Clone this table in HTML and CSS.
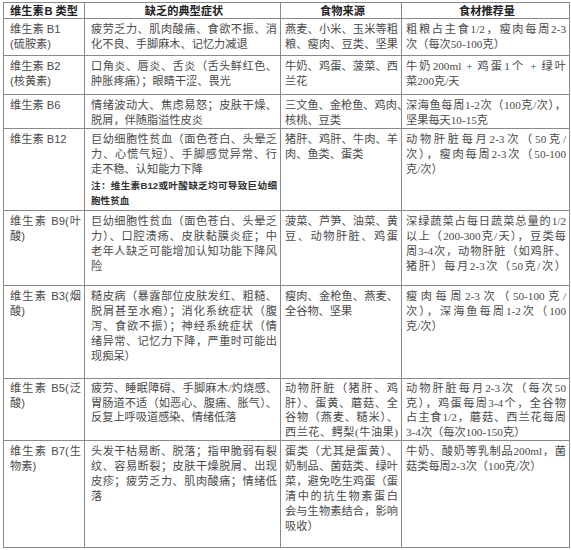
FILE: index.html
```html
<!DOCTYPE html>
<html lang="zh-CN">
<head>
<meta charset="utf-8">
<title>维生素B类型</title>
<link rel="stylesheet" href="styles.css">
</head>
<body>
<table class="vt">
  <colgroup>
    <col class="c1"><col class="c2"><col class="c3"><col class="c4">
  </colgroup>
  <thead>
    <tr class="rh">
      <th class="th-left">维生素<span class="lat">B</span> 类型</th>
      <th>缺乏的典型症状</th>
      <th>食物来源</th>
      <th>食材推荐量</th>
    </tr>
  </thead>
  <tbody>
    <tr class="r-b1">
      <td class="name"><span class="ln e">维生素 B1</span><span class="ln e">(硫胺素)</span></td>
      <td><span class="ln">疲劳乏力、肌肉酸痛、食欲不振、消</span><span class="ln e">化不良、手脚麻木、记忆力减退</span></td>
      <td><span class="ln">燕麦、小米、玉米等粗</span><span class="ln">粮、瘦肉、豆类、坚果</span></td>
      <td><span class="ln">粗粮占主食1/2，瘦肉每周2-3</span><span class="ln e">次（每次50-100克）</span></td>
    </tr>
    <tr class="r-b2">
      <td class="name"><span class="ln e">维生素 B2</span><span class="ln e">(核黄素)</span></td>
      <td><span class="ln">口角炎、唇炎、舌炎（舌头鲜红色、</span><span class="ln e">肿胀疼痛）；眼睛干涩、畏光</span></td>
      <td><span class="ln">牛奶、鸡蛋、菠菜、西</span><span class="ln e">兰花</span></td>
      <td><span class="ln">牛奶200ml + 鸡蛋1个 + 绿叶</span><span class="ln e">菜200克/天</span></td>
    </tr>
    <tr class="r-b6">
      <td class="name"><span class="ln e">维生素 B6</span></td>
      <td><span class="ln">情绪波动大、焦虑易怒；皮肤干燥、</span><span class="ln e">脱屑，伴随脂溢性皮炎</span></td>
      <td><span class="ln">三文鱼、金枪鱼、鸡肉、</span><span class="ln e">核桃、豆类</span></td>
      <td><span class="ln">深海鱼每周1-2次（100克/次），</span><span class="ln e">坚果每天10-15克</span></td>
    </tr>
    <tr class="r-b12">
      <td class="name"><span class="ln e">维生素 B12</span></td>
      <td>
        <div class="p"><span class="ln">巨幼细胞性贫血（面色苍白、头晕乏</span><span class="ln">力、心慌气短）、手脚感觉异常、行</span><span class="ln e">走不稳、认知能力下降</span></div>
        <div class="p note"><span class="ln">注：维生素<span class="nl">B12</span>或叶酸缺乏均可导致巨幼细</span><span class="ln e">胞性贫血</span></div>
      </td>
      <td><span class="ln">猪肝、鸡肝、牛肉、羊</span><span class="ln e">肉、鱼类、蛋类</span></td>
      <td><span class="ln">动物肝脏每月2-3次（50克/</span><span class="ln">次），瘦肉每周2-3次（50-100</span><span class="ln e">克/次）</span></td>
    </tr>
    <tr class="r-b9">
      <td class="name"><span class="ln">维生素 B9(叶</span><span class="ln e">酸)</span></td>
      <td><span class="ln">巨幼细胞性贫血（面色苍白、头晕乏</span><span class="ln">力）、口腔溃疡、皮肤黏膜炎症；中</span><span class="ln">老年人缺乏可能增加认知功能下降风</span><span class="ln e">险</span></td>
      <td><span class="ln">菠菜、芦笋、油菜、黄</span><span class="ln">豆、动物肝脏、鸡蛋</span></td>
      <td><span class="ln">深绿蔬菜占每日蔬菜总量的1/2</span><span class="ln">以上（200-300克/天），豆类每</span><span class="ln">周3-4次，动物肝脏（如鸡肝、</span><span class="ln">猪肝）每月2-3次（50克/次）</span></td>
    </tr>
    <tr class="r-b3">
      <td class="name"><span class="ln">维生素 B3(烟</span><span class="ln e">酸)</span></td>
      <td><span class="ln">糙皮病（暴露部位皮肤发红、粗糙、</span><span class="ln">脱屑甚至水疱）；消化系统症状（腹</span><span class="ln">泻、食欲不振）；神经系统症状（情</span><span class="ln">绪异常、记忆力下降，严重时可能出</span><span class="ln e">现痴呆）</span></td>
      <td><span class="ln">瘦肉、金枪鱼、燕麦、</span><span class="ln e">全谷物、坚果</span></td>
      <td><span class="ln">瘦肉每周2-3次（50-100克/</span><span class="ln">次），深海鱼每周1-2次（100</span><span class="ln e">克/次）</span></td>
    </tr>
    <tr class="r-b5">
      <td class="name"><span class="ln">维生素 B5(泛</span><span class="ln e">酸)</span></td>
      <td><span class="ln">疲劳、睡眠障碍、手脚麻木/灼烧感、</span><span class="ln">胃肠道不适（如恶心、腹痛、胀气）、</span><span class="ln e">反复上呼吸道感染、情绪低落</span></td>
      <td><span class="ln">动物肝脏（猪肝、鸡</span><span class="ln">肝）、蛋黄、蘑菇、全</span><span class="ln">谷物（燕麦、糙米）、</span><span class="ln">西兰花、鳄梨(牛油果)</span></td>
      <td><span class="ln">动物肝脏每月2-3次（每次50</span><span class="ln">克），鸡蛋每周3-4个，全谷物</span><span class="ln">占主食1/2，蘑菇、西兰花每周</span><span class="ln e">3-4次（每次100-150克）</span></td>
    </tr>
    <tr class="r-b7">
      <td class="name"><span class="ln">维生素 B7(生</span><span class="ln e">物素)</span></td>
      <td><span class="ln">头发干枯易断、脱落；指甲脆弱有裂</span><span class="ln">纹、容易断裂；皮肤干燥脱屑、出现</span><span class="ln">皮疹；疲劳乏力、肌肉酸痛；情绪低</span><span class="ln e">落</span></td>
      <td><span class="ln">蛋类（尤其是蛋黄）、</span><span class="ln">奶制品、菌菇类、绿叶</span><span class="ln">菜，避免吃生鸡蛋（蛋</span><span class="ln">清中的抗生物素蛋白</span><span class="ln">会与生物素结合，影响</span><span class="ln e">吸收）</span></td>
      <td><span class="ln">牛奶、酸奶等乳制品200ml，菌</span><span class="ln e">菇类每周2-3次（100克/次）</span></td>
    </tr>
  </tbody>
</table>
</body>
</html>
```

FILE: styles.css
```css
html, body {
  margin: 0;
  padding: 0;
  background: #ffffff;
}

body {
  font-family: "Liberation Serif", "Noto Sans CJK SC", serif;
  color: #4a4a4a;
}

.vt {
  margin: 2px 0 0 3px;
  width: 566px;
  border-collapse: collapse;
  table-layout: fixed;
  border: 1px solid #8a8a8a;
}

.c1 { width: 81px; }
.c2 { width: 196px; }
.c3 { width: 121px; }
.c4 { width: 168px; }

.vt th,
.vt td {
  border: 1px solid #8a8a8a;
  vertical-align: top;
  font-size: 11.2px;
  line-height: 15px;
  padding: 3px 3px 0 6px;
  font-weight: normal;
}

.vt td + td + td {
  padding-left: 4px;
}

.vt th {
  font-weight: bold;
  color: #222222;
  text-align: center;
  line-height: 13px;
  padding-top: 2px;
  padding-bottom: 0;
}

.vt th.th-left {
  text-align: left;
}

.lat {
  font-family: "Liberation Sans", sans-serif;
  margin-left: 1px;
}

.name {
  font-family: "Liberation Sans", "Noto Sans CJK SC", sans-serif;
}

.ln {
  display: block;
  text-align: justify;
  text-align-last: justify;
  white-space: nowrap;
}

.ln.e {
  text-align-last: left;
}

.note {
  margin-top: 1px;
  font-size: 9.6px;
  line-height: 15px;
  font-weight: bold;
  color: #333333;
}

.nl {
  font-family: "Liberation Sans", sans-serif;
}

.rh { height: 16px; }
.r-b1 { height: 37px; }
.r-b2 { height: 39px; }
.r-b6 { height: 32px; }
.r-b12 { height: 82px; }
.r-b9 { height: 75px; }
.r-b3 { height: 93px; }
.r-b5 { height: 62px; }
.r-b7 { height: 107px; }

.r-b5 td {
  line-height: 14.5px;
  padding-top: 2px;
}
```
